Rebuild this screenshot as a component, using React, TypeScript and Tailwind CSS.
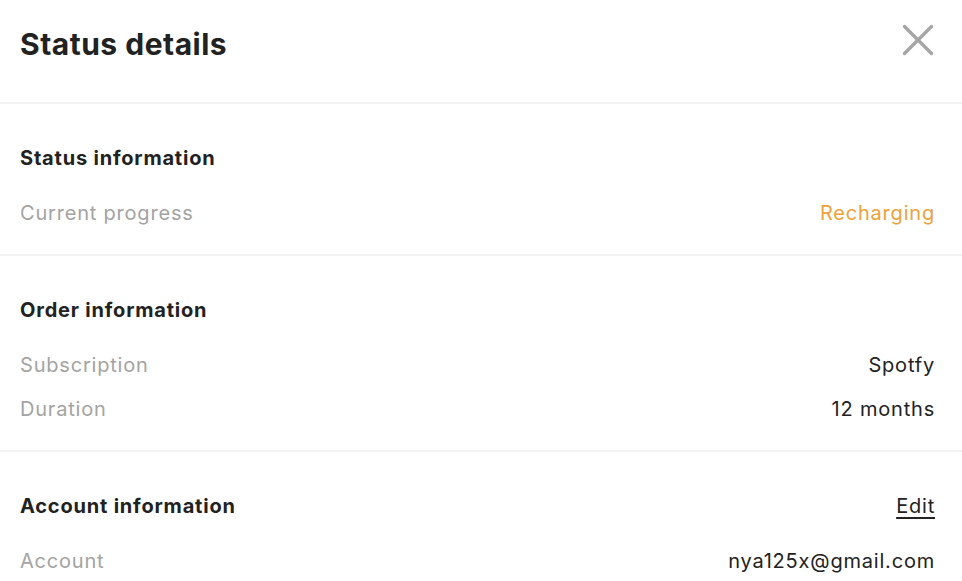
import { X } from "lucide-react";

type Row = { label: string; value: string; valueClass?: string };

const Section = ({
  title,
  rows,
  action,
  last,
}: {
  title: string;
  rows: Row[];
  action?: string;
  last?: boolean;
}) => (
  <section
    className={
      "pl-5 pr-[27px] pt-[40px] pb-[27px] " +
      (last ? "" : "border-b-2 border-[#f3f3f3]")
    }
  >
    <div className="flex items-center justify-between h-[28px]">
      <h2 className="text-[20px] font-bold text-[#222222] tracking-[0.8px]">{title}</h2>
      {action && (
        <a
          href="#"
          className="text-[20px] text-[#222222] tracking-[0.8px] underline underline-offset-4"
        >
          {action}
        </a>
      )}
    </div>
    <div className="mt-[27px] flex flex-col gap-[16px]">
      {rows.map((r) => (
        <div
          key={r.label}
          className="flex items-center justify-between h-[28px] text-[20px] tracking-[0.8px]"
        >
          <span className="text-[#a3a3a3]">{r.label}</span>
          <span className={r.valueClass ?? "text-[#222222]"}>{r.value}</span>
        </div>
      ))}
    </div>
  </section>
);

export default function App() {
  return (
    <div
      className="w-[962px] h-[581px] overflow-hidden bg-white"
      style={{ fontFamily: "Inter, 'Noto Sans', sans-serif" }}
    >
      <header className="flex items-center justify-between h-[104px] pl-5 pr-[17px] border-b-2 border-[#f3f3f3] pb-[14px]">
        <h1 className="text-[30px] font-bold text-[#222222] tracking-[0.5px]">Status details</h1>
        <button className="text-[#a6a6a6] -mt-[8px]">
          <X size={54} strokeWidth={1.5} />
        </button>
      </header>
      <Section
        title="Status information"
        rows={[{ label: "Current progress", value: "Recharging", valueClass: "text-[#eea13a]" }]}
      />
      <Section
        title="Order information"
        rows={[
          { label: "Subscription", value: "Spotfy" },
          { label: "Duration", value: "12 months" },
        ]}
      />
      <Section
        title="Account information"
        action="Edit"
        rows={[{ label: "Account", value: "nya125x@gmail.com" }]}
        last
      />
    </div>
  );
}
